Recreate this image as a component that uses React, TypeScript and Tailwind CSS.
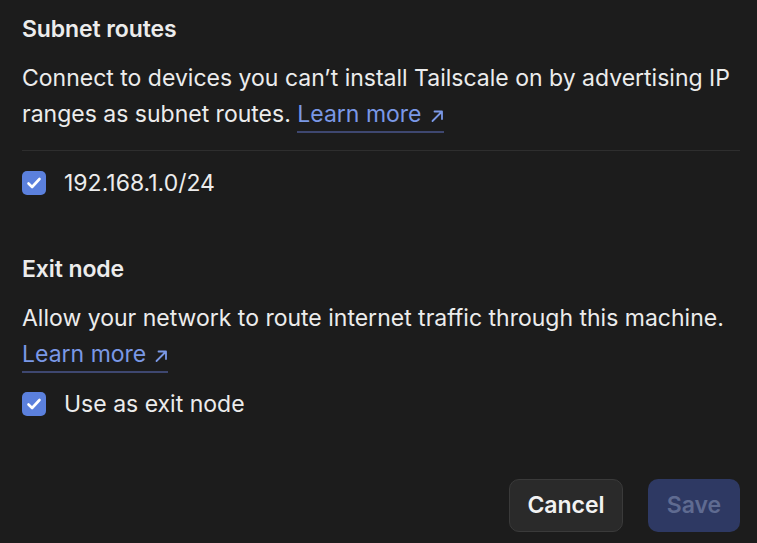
import React from "react";

function Check() {
  return (
    <span className="flex h-[24px] w-[24px] shrink-0 items-center justify-center rounded-[5px] bg-[#5b80dd]">
      <svg width="20" height="20" viewBox="0 0 20 20" fill="none">
        <path d="M4.5 10.5l3.6 3.5 7.4-8" stroke="#fff" strokeWidth="2.6" strokeLinecap="round" strokeLinejoin="round" />
      </svg>
    </span>
  );
}

function LearnMore() {
  return (
    <a className="text-[#7a98e6] border-b-[2px] border-[#3e4770] pb-[3px] whitespace-nowrap">
      Learn more
      <svg width="14" height="14" viewBox="0 0 14 14" fill="none" className="ml-[8px] inline-block align-[-1px]">
        <path d="M2.5 12L12 2.5M4.5 2.5H12V10" stroke="#7a98e6" strokeWidth="1.8" strokeLinecap="round" strokeLinejoin="round" />
      </svg>
    </a>
  );
}

export default function App() {
  return (
    <div
      className="w-[757px] h-[543px] bg-[#1c1c1c] text-[#ececec] overflow-hidden"
      style={{ fontFamily: "Inter, 'Noto Sans', sans-serif" }}
    >
      <div className="pl-[22px] pr-[17px] pt-[13px]">
        <h2 className="text-[23px] font-semibold leading-[32px] tracking-[-0.1px]">Subnet routes</h2>
        <p className="mt-[15px] text-[23px] leading-[36px]">
          Connect to devices you can’t install Tailscale on by advertising IP ranges as subnet routes.{" "}
          <LearnMore />
        </p>
        <div className="mt-[18px] border-t border-[#2e2e2e]" />
        <label className="mt-[19px] flex items-center gap-[18px] text-[23px] leading-[26px]">
          <Check />
          <span>192.168.1.0/24</span>
        </label>

        <h2 className="mt-[57px] text-[23px] font-semibold leading-[32px] tracking-[-0.1px]">Exit node</h2>
        <p className="mt-[15px] text-[23px] leading-[36px]">
          Allow your network to route internet traffic through this machine.{" "}
          <LearnMore />
        </p>
        <label className="mt-[19px] flex items-center gap-[18px] text-[23px] leading-[26px]">
          <Check />
          <span>Use as exit node</span>
        </label>

        <div className="mt-[62px] flex justify-end gap-[25px]">
          <button className="h-[53px] w-[114px] rounded-[10px] border border-[#3a3a3a] bg-[#2a2a2a] text-[23px] font-semibold text-[#f2f2f2]">
            Cancel
          </button>
          <button className="h-[53px] w-[92px] rounded-[10px] bg-[#2e3963] text-[23px] font-semibold text-[#5f6b91]">
            Save
          </button>
        </div>
      </div>
    </div>
  );
}
